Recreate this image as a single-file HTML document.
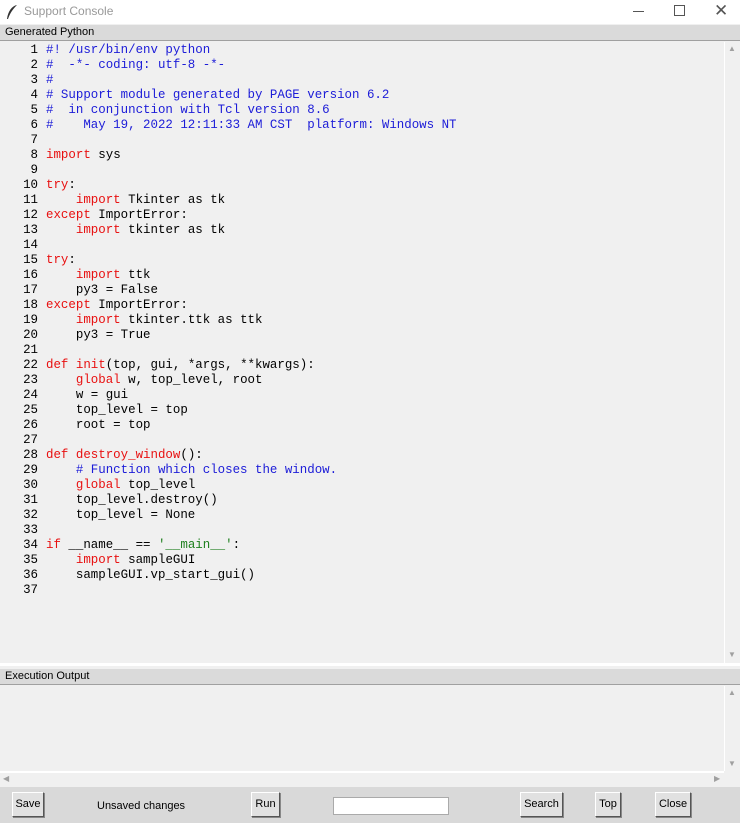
<!DOCTYPE html>
<html><head><meta charset="utf-8"><style>
*{margin:0;padding:0;box-sizing:border-box}
body{width:740px;height:823px;background:#f0f0f0;position:relative;overflow:hidden;font-family:"Liberation Sans",sans-serif}
.abs{position:absolute}
#title{left:0;top:0;width:740px;height:24px;background:#fff}
#title span{position:absolute;left:24px;top:4px;font-size:12px;color:#999}
.lbl{left:0;width:740px;height:16px;background:#dadada;border-bottom:1px solid #a0a0a0;font-size:11px;color:#000;padding:1px 0 0 5px}
pre{font-family:"Liberation Mono",monospace;font-size:12.45px;line-height:15px;color:#000}
.b{color:#1c1cd8}.r{color:#e81010}.g{color:#208020}
#nums{left:0;top:43px;width:38px;text-align:right}
#code{left:46px;top:43px}
.sb{background:#f0f0f0;border-left:1px solid #fff}
.btn{position:absolute;top:792px;height:25px;background:#e1e1e1;border:1px solid;border-color:#fff #555 #555 #fff;box-shadow:1px 1px 0 #888;font-size:11px;text-align:center;line-height:22px}
.tri{position:absolute;font-size:8px;color:#a0a0a0}
</style></head><body>
<div id="title" class="abs">
<svg class="abs" style="left:6px;top:4px" width="12" height="16" viewBox="0 0 12 16"><path d="M11 1 C6 2 2 7 1 15 L2 15 C4 9 7 5 11 1Z" fill="#333"/></svg>
<span>Support Console</span>
<div class="abs" style="left:633px;top:11px;width:11px;height:1px;background:#555"></div>
<div class="abs" style="left:674px;top:5px;width:11px;height:11px;border:1px solid #555"></div>
<div class="abs" style="left:714px;top:0;font-size:17px;color:#555;line-height:22px">✕</div>
</div>
<div class="abs lbl" style="top:25px">Generated Python</div>
<pre id="nums" class="abs">1
2
3
4
5
6
7
8
9
10
11
12
13
14
15
16
17
18
19
20
21
22
23
24
25
26
27
28
29
30
31
32
33
34
35
36
37</pre>
<pre id="code" class="abs"><span class="b">#! /usr/bin/env python
#  -*- coding: utf-8 -*-
#
# Support module generated by PAGE version 6.2
#  in conjunction with Tcl version 8.6
#    May 19, 2022 12:11:33 AM CST  platform: Windows NT</span>

<span class="r">import</span> sys

<span class="r">try</span>:
    <span class="r">import</span> Tkinter as tk
<span class="r">except</span> ImportError:
    <span class="r">import</span> tkinter as tk

<span class="r">try</span>:
    <span class="r">import</span> ttk
    py3 = False
<span class="r">except</span> ImportError:
    <span class="r">import</span> tkinter.ttk as ttk
    py3 = True

<span class="r">def init</span>(top, gui, *args, **kwargs):
    <span class="r">global</span> w, top_level, root
    w = gui
    top_level = top
    root = top

<span class="r">def destroy_window</span>():
    <span class="b"># Function which closes the window.</span>
    <span class="r">global</span> top_level
    top_level.destroy()
    top_level = None

<span class="r">if</span> __name__ == <span class="g">'__main__'</span>:
    <span class="r">import</span> sampleGUI
    sampleGUI.vp_start_gui()
</pre>
<div class="abs sb" style="left:724px;top:42px;width:16px;height:622px"></div>
<div class="tri" style="left:728px;top:44px">▲</div>
<div class="tri" style="left:728px;top:650px">▼</div>
<div class="abs" style="left:0;top:663px;width:740px;height:3px;background:#fff"></div>
<div class="abs lbl" style="top:669px">Execution Output</div>
<div class="abs sb" style="left:724px;top:686px;width:16px;height:85px"></div>
<div class="tri" style="left:728px;top:688px">▲</div>
<div class="tri" style="left:728px;top:759px">▼</div>
<div class="abs" style="left:0;top:771px;width:724px;height:2px;background:#fff"></div>
<div class="abs" style="left:0;top:773px;width:740px;height:15px;background:#f0f0f0"></div>
<div class="tri" style="left:3px;top:774px">◀</div>
<div class="tri" style="left:714px;top:774px">▶</div>
<div class="abs" style="left:0;top:787px;width:740px;height:36px;background:#d9d9d9"></div>
<div class="btn" style="left:12px;width:32px">Save</div>
<div class="abs" style="left:97px;top:800px;font-size:11px">Unsaved changes</div>
<div class="btn" style="left:251px;width:29px">Run</div>
<div class="abs" style="left:333px;top:797px;width:116px;height:18px;background:#fff;border:1px solid #aaa"></div>
<div class="btn" style="left:520px;width:43px">Search</div>
<div class="btn" style="left:595px;width:26px">Top</div>
<div class="btn" style="left:655px;width:36px">Close</div>
</body></html>
